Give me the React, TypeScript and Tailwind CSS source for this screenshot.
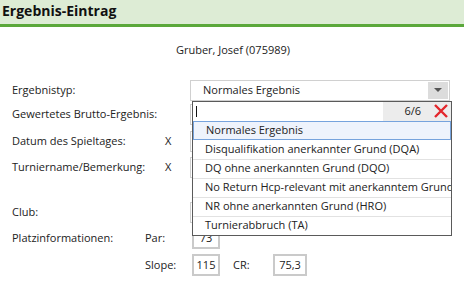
import { useState } from "react";

const options = [
  "Normales Ergebnis",
  "Disqualifikation anerkannter Grund (DQA)",
  "DQ ohne anerkannten Grund (DQO)",
  "No Return Hcp-relevant mit anerkanntem Grund (NRA)",
  "NR ohne anerkannten Grund (HRO)",
  "Turnierabbruch (TA)",
];

function Field({ className = "" }: { className?: string }) {
  return <div className={`h-[21px] border border-[#cfcfcf] bg-white ${className}`} />;
}

function App() {
  const [selected] = useState(0);

  return (
    <main
      className="w-[464px] h-[284px] overflow-hidden bg-white text-[11px] text-[#222]"
      style={{ fontFamily: '"Open Sans", "Noto Sans", sans-serif' }}
    >
      <header className="h-[27px] bg-[#ddecd5] border-b-[3px] border-[#5ba83b] px-[2px] flex items-center">
        <h1 className="text-[14px] font-bold text-[#111] leading-none -mt-[2px]">Ergebnis-Eintrag</h1>
      </header>

      <div className="h-[46px] flex items-center justify-center pl-[2px]">Gruber, Josef (075989)</div>

      <div className="flex flex-col pl-[12px] mt-[5px]">
        {/* Ergebnistyp */}
        <div className="relative h-[24px] flex items-center">
          <span className="w-[178px]">Ergebnistyp:</span>
          <div className="relative w-[260px] h-[21px] border border-[#d0d0d0] flex items-center bg-white">
            <span className="pl-[12px] flex-1">{options[selected]}</span>
            <div className="w-[20px] h-[17px] mr-[1px] bg-[#dcdcdc] flex items-center justify-center">
              <div className="w-0 h-0 border-l-[4px] border-r-[4px] border-t-[4px] border-l-transparent border-r-transparent border-t-[#555]" />
            </div>

            {/* open dropdown */}
            <div className="absolute z-10 left-[1px] top-[20px] w-[260px] border border-[#5a5a5a] bg-white">
              <div className="h-[19px] flex">
                <div className="flex-1 flex items-center pl-[3px]">
                  <div className="w-px h-[11px] bg-[#111]" />
                </div>
                <div className="w-[48px] bg-[#ececec] flex items-center justify-end pr-[10px]">6/6</div>
                <div className="w-[20px] bg-[#ececec] flex items-center justify-center">
                  <svg width="16" height="16" viewBox="0 0 16 16">
                    <path d="M2 2 L14 14 M14 2 L2 14" stroke="#e3262b" strokeWidth="2.4" />
                  </svg>
                </div>
              </div>
              {options.map((o, i) => (
                <div
                  key={o}
                  className={`h-[19px] flex items-center pl-[12px] whitespace-nowrap overflow-hidden ${
                    i === selected
                      ? "bg-[#eef3fc] border border-[#76a3dd] pl-[11px]"
                      : "border-t border-[#e2e2e2]"
                  } ${i === selected + 1 ? "border-t-0" : ""}`}
                >
                  {o}
                </div>
              ))}
            </div>
          </div>
        </div>

        {/* Gewertetes Brutto-Ergebnis */}
        <div className="h-[24px] flex items-center">
          <span className="w-[178px]">Gewertetes Brutto-Ergebnis:</span>
          <Field className="w-[262px]" />
        </div>

        {/* Datum */}
        <div className="h-[30px] flex items-center">
          <span className="w-[153px]">Datum des Spieltages:</span>
          <span className="w-[25px]">X</span>
          <Field className="w-[262px]" />
        </div>

        {/* Turniername */}
        <div className="h-[22px] flex items-center">
          <span className="w-[153px]">Turniername/Bemerkung:</span>
          <span className="w-[25px]">X</span>
          <Field className="w-[262px]" />
        </div>

        <div className="h-[22px]" />

        {/* Club */}
        <div className="h-[24px] flex items-center">
          <span className="w-[178px]">Club:</span>
          <Field className="w-[262px]" />
        </div>

        {/* Platzinformationen */}
        <div className="h-[28px] flex items-center">
          <span className="w-[133px]">Platzinformationen:</span>
          <span className="w-[47px]">Par:</span>
          <div className="w-[28px] h-[22px] border-2 border-[#cacaca] flex items-center justify-center">73</div>
        </div>

        <div className="h-[26px] flex items-center">
          <span className="w-[133px]" />
          <span className="w-[47px]">Slope:</span>
          <div className="w-[28px] h-[22px] border-2 border-[#cacaca] flex items-center justify-center">115</div>
          <span className="ml-[13px] w-[40px]">CR:</span>
          <div className="w-[34px] h-[22px] border-2 border-[#cacaca] flex items-center justify-center">75,3</div>
        </div>
      </div>
    </main>
  );
}

export default App;
